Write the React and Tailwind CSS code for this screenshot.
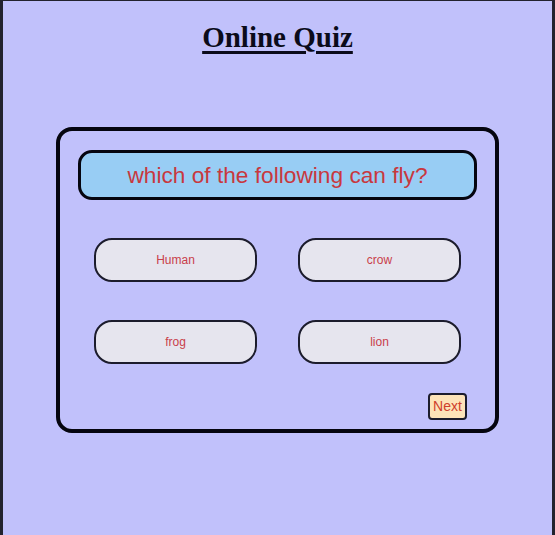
export default function App() {
  const opts = ["Human", "crow", "frog", "lion"];
  return (
    <div className="w-[555px] h-[535px] bg-[#c1c1fb] border-l-[3px] border-r-[3px] border-t-[1px] border-[#22222e] flex flex-col items-center overflow-hidden">
      <h1
        className="mt-[20px] text-[29px] leading-[33px] font-bold underline decoration-[3px] underline-offset-[4px] text-[#0b0b1a]"
        style={{ fontFamily: '"Liberation Serif", serif' }}
      >
        Online Quiz
      </h1>
      <div
        className="mt-[73px] w-[443px] h-[306px] border-[4px] border-[#05050f] rounded-[16px] flex flex-col px-[18px] pt-[19px]"
        style={{ fontFamily: '"Liberation Sans", Arial, sans-serif' }}
      >
        <div className="h-[50px] border-[3px] border-[#05050f] rounded-[14px] bg-[#98cdf4] flex items-center justify-center text-[22.7px] text-[#c8383e]">
          which of the following can fly?
        </div>
        <div className="mt-[38px] px-[16px] grid grid-cols-2 gap-x-[41px] gap-y-[38px]">
          {opts.map((o) => (
            <div
              key={o}
              className="h-[44px] border-[2px] border-[#1c1c2c] rounded-[18px] bg-[#e6e5ee] flex items-center justify-center text-[12px] text-[#c9404a]"
            >
              {o}
            </div>
          ))}
        </div>
        <div className="mt-[29px] flex justify-end pr-[10px]">
          <div className="w-[39px] h-[27px] border-[2px] border-[#1c1c2c] rounded-[4px] bg-[#fde3b8] flex items-center justify-center text-[14px] text-[#cf3f2c]">
            Next
          </div>
        </div>
      </div>
    </div>
  );
}
